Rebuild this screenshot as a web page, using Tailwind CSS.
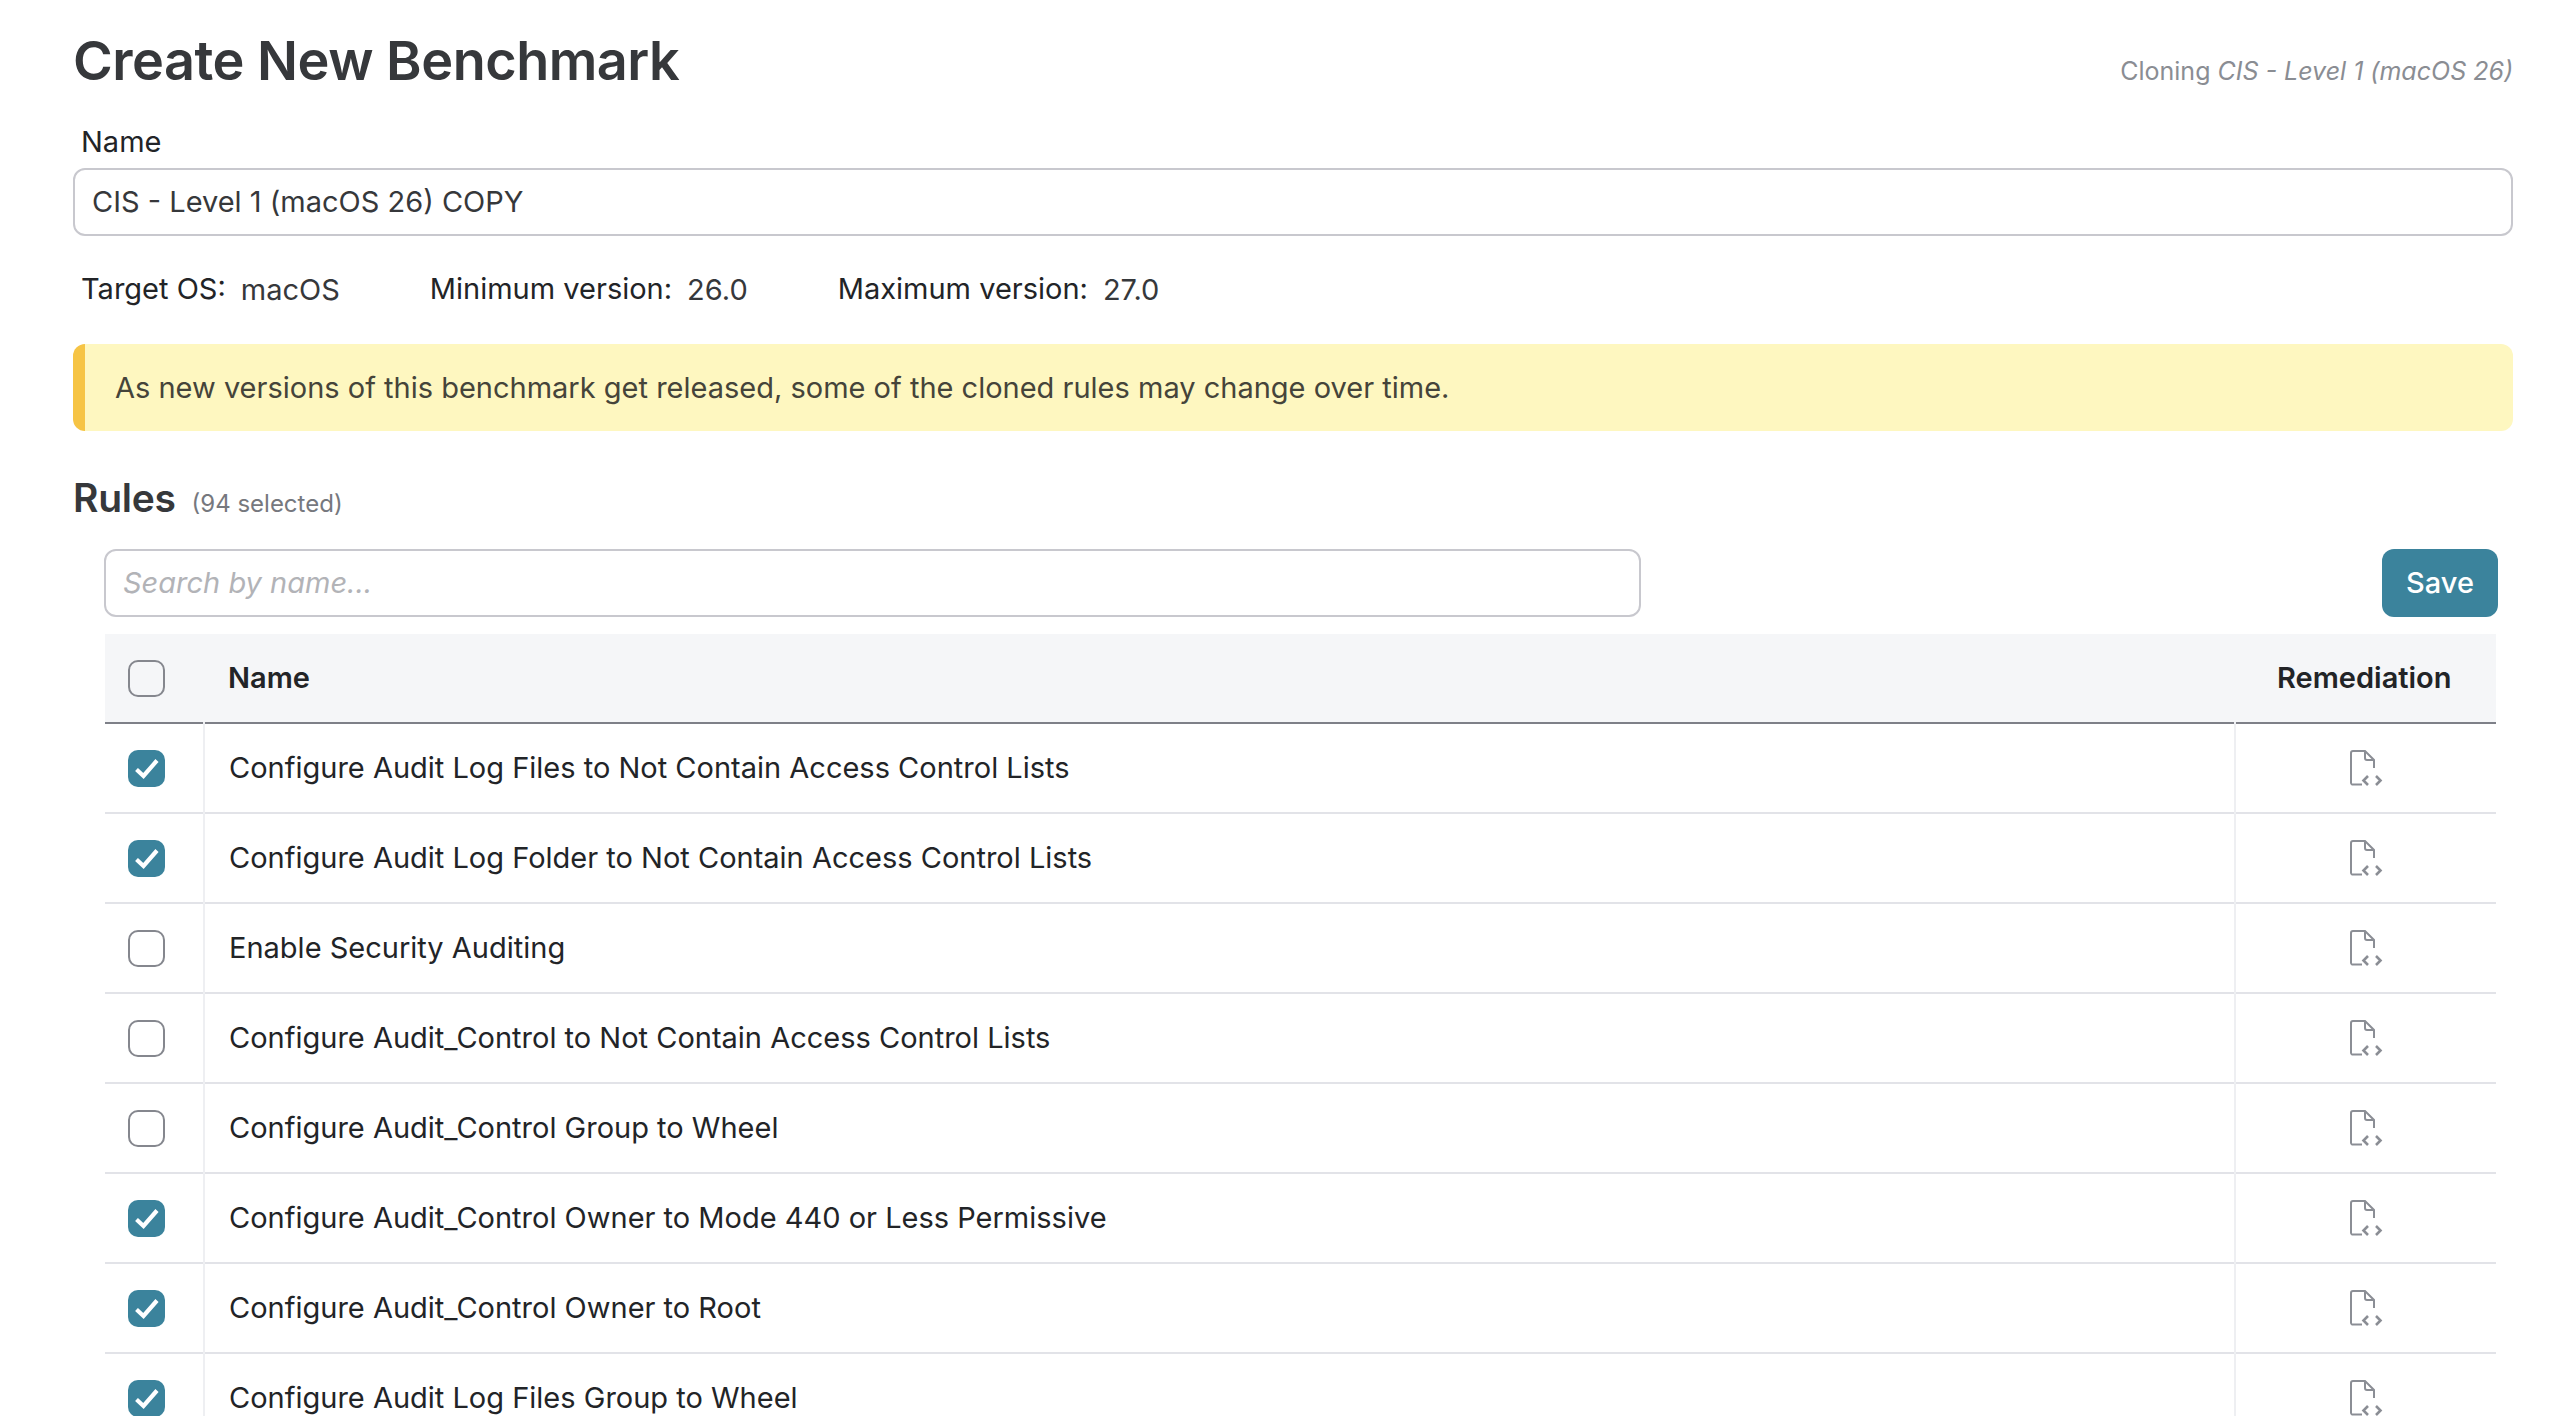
<!DOCTYPE html>
<html lang="en">
<head>
    <meta charset="UTF-8">
    <title>Create New Benchmark</title>
    <script src="https://cdn.jsdelivr.net/npm/@tailwindcss/browser@4"></script>
</head>
<body class="h-screen overflow-hidden bg-white font-['Inter',sans-serif] text-[#222427]">
    <div class="pl-[73px] pr-[37px]">
        <div class="flex items-end justify-between pt-[30px] h-[122px]">
            <h1 class="text-[54px] leading-[62px] mb-[30px] font-semibold tracking-[-0.5px] text-[#36383b]">Create New Benchmark</h1>
            <p class="text-[25px] leading-[30px] mb-[36px] text-[#8a8d93]">Cloning <em>CIS - Level 1 (macOS 26)</em></p>
        </div>

        <label class="block pl-[8px] text-[29px] leading-[36px] mt-[2px] mb-[8px]">Name</label>
        <div class="h-[68px] border-2 border-[#c8c8ce] rounded-[12px] flex items-center pl-[17px] text-[29px] text-[#36383b]">CIS - Level 1 (macOS 26) COPY</div>

        <div class="flex items-center pl-[8px] mt-[33px] h-[40px] text-[29px]">
            <span>Target OS:</span>
            <span class="ml-[15px] mt-[2px] text-[#36383b]">macOS</span>
            <span class="ml-[90px]">Minimum version:</span>
            <span class="ml-[15px] mt-[2px] text-[#36383b]">26.0</span>
            <span class="ml-[90px]">Maximum version:</span>
            <span class="ml-[15px] mt-[2px] text-[#36383b]">27.0</span>
        </div>

        <div class="mt-[35px] h-[87px] bg-[#fef7c0] border-l-[12px] border-[#f6c445] rounded-[12px] flex items-center pl-[30px] text-[29px] text-[#45443a]">
            As new versions of this benchmark get released, some of the cloned rules may change over time.
        </div>

        <div class="flex items-baseline mt-[44px] h-[46px]">
            <h2 class="text-[39px] leading-[46px] font-semibold tracking-[-0.3px] text-[#36383b]">Rules</h2>
            <span class="ml-[16px] text-[24px] text-[#76787e]">(94 selected)</span>
        </div>

        <div class="flex items-center justify-between ml-[31px] mr-[15px] mt-[28px]">
            <div class="w-[1537px] h-[68px] border-2 border-[#c8c8ce] rounded-[12px] flex items-center pl-[17px] text-[29px] italic text-[#b2b3b7]">Search by name...</div>
            <button class="w-[116px] h-[68px] rounded-[12px] bg-[#3b839c] text-white text-[29px] font-medium">Save</button>
        </div>

        <table class="ml-[32px] mt-[17px] w-[2391px] table-fixed border-collapse text-[29px]">
            <thead>
                <tr class="h-[89px] bg-[#f5f6f8] border-b-2 border-[#7e8088]">
                    <th class="w-[99px] pl-[23px] text-left align-middle"><span class="block w-[37px] h-[37px] rounded-[10px] border-2 border-[#85878e]"></span></th>
                    <th class="pl-[24px] text-left font-semibold">Name</th>
                    <th class="w-[261px] pl-[42px] text-left font-semibold">Remediation</th>
                </tr>
            </thead>
            <tbody id="rows"></tbody>
        </table>
    </div>

    <script>
        const rules = [
            ['Configure Audit Log Files to Not Contain Access Control Lists', true],
            ['Configure Audit Log Folder to Not Contain Access Control Lists', true],
            ['Enable Security Auditing', false],
            ['Configure Audit_Control to Not Contain Access Control Lists', false],
            ['Configure Audit_Control Group to Wheel', false],
            ['Configure Audit_Control Owner to Mode 440 or Less Permissive', true],
            ['Configure Audit_Control Owner to Root', true],
            ['Configure Audit Log Files Group to Wheel', true],
        ];

        const unchecked = '<span class="block w-[37px] h-[37px] rounded-[10px] border-2 border-[#85878e]"></span>';
        const checked = `<span class="flex items-center justify-center w-[37px] h-[37px] rounded-[10px] bg-[#3b839c]">
            <svg width="27" height="27" viewBox="0 0 27 27" fill="none" stroke="#fff" stroke-width="4.2"><path d="M3.5 14.5 10.5 21 24 5.5"/></svg>
        </span>`;
        const fileIcon = `<svg class="block mx-auto" width="34" height="36" viewBox="0 0 34 36" fill="none" stroke="#8b8e95" stroke-width="2">
            <path d="M13 34.5H3a2 2 0 0 1-1-1.5V3a2 2 0 0 1 2-2h12l9 9v8"/>
            <path d="M16 1v7a2 2 0 0 0 2 2h7"/>
            <path stroke-width="2.6" d="M19 26l-4.5 4.5L19 35M27 26l4.500 4.500L27 35"/>
        </svg>`;

        document.getElementById('rows').innerHTML = rules.map(([name, on]) => `
            <tr class="h-[90px] border-b-2 border-[#e2e3e8]">
                <td class="pl-[23px] border-r-2 border-[#eeeff2]">${on ? checked : unchecked}</td>
                <td class="pl-[24px] border-r-2 border-[#eeeff2]">${name}</td>
                <td>${fileIcon}</td>
            </tr>`).join('');
    </script>
</body>
</html>
